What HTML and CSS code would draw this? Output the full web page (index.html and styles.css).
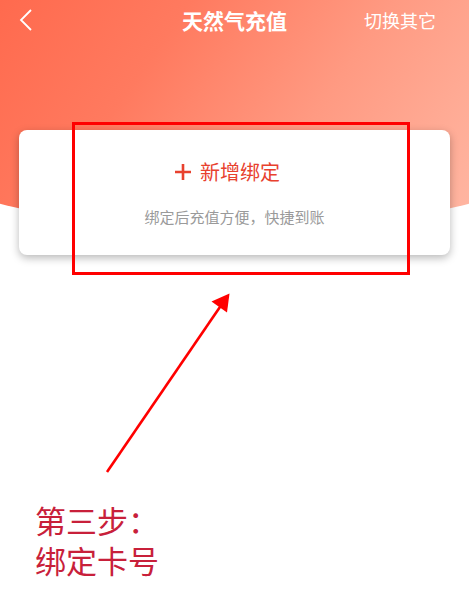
FILE: index.html
```html
<!DOCTYPE html>
<html lang="zh-CN">
<head>
<meta charset="utf-8">
<title>天然气充值</title>
<link rel="stylesheet" href="styles.css">
</head>
<body>
<div class="page">
  <div class="hero-bg"></div>
  <header class="nav">
    <svg class="back" width="14" height="22" viewBox="0 0 14 22"><polyline points="12,1 2,11 12,21" fill="none" stroke="#fff" stroke-width="1.8"/></svg>
    <h1 class="title">天然气充值</h1>
    <span class="switch">切换其它</span>
  </header>
  <section class="card">
    <div class="add-row">
      <svg class="plus" width="16" height="16" viewBox="0 0 16 16"><path d="M8 0V16M0 8H16" stroke="#e8412e" stroke-width="2.6"/></svg>
      <span class="add-text">新增绑定</span>
    </div>
    <p class="hint">绑定后充值方便，快捷到账</p>
  </section>
  <p class="step">第三步：<br>绑定卡号</p>
  <div class="highlight"></div>
  <svg class="arrow" width="469" height="600" viewBox="0 0 469 600">
    <line x1="107" y1="472" x2="222" y2="304" stroke="#ff0000" stroke-width="2.6"/>
    <polygon points="229.5,293.5 211.5,301.5 227,312.5" fill="#ff0000"/>
  </svg>
</div>
</body>
</html>
```

FILE: styles.css
```css
html, body {
  margin: 0;
  padding: 0;
  background: #fff;
}
body {
  font-family: "Noto Sans CJK SC", "Noto Sans", sans-serif;
}
.page {
  position: relative;
  width: 469px;
  height: 600px;
  overflow: hidden;
}
.hero-bg {
  position: absolute;
  left: 0;
  top: 0;
  width: 469px;
  height: 240px;
  background: linear-gradient(125deg, #ff6a4e 0%, #ff7a5f 30%, #ff9a82 62%, #ffb8a4 100%);
  clip-path: ellipse(469px 211px at 50% 21px);
  z-index: 0;
}
.nav {
  position: relative;
  z-index: 1;
  height: 40px;
  display: grid;
  grid-template-columns: 1fr auto 1fr;
  align-items: center;
  padding: 0 33px 0 19px;
}
.back {
  display: block;
  width: 14px;
  height: 22px;
}
.title {
  margin: 0 0 0 14px;
  font-size: 21px;
  font-weight: 700;
  color: #fff;
  line-height: 40px;
}
.switch {
  justify-self: end;
  font-size: 18px;
  color: #fff;
  line-height: 40px;
}
.card {
  position: relative;
  z-index: 1;
  margin: 90px 0 0 19px;
  width: 431px;
  height: 125px;
  background: #fff;
  border-radius: 8px;
  box-shadow: 0 3px 8px rgba(0, 0, 0, 0.28);
  display: flex;
  flex-direction: column;
  align-items: center;
}
.add-row {
  margin-top: 28px;
  height: 28px;
  display: flex;
  align-items: center;
  gap: 9px;
  padding-right: 14px;
}
.plus {
  display: block;
}
.add-text {
  font-size: 20px;
  color: #e8412e;
  line-height: 28px;
}
.hint {
  margin: 21px 0 0;
  font-size: 15px;
  line-height: 20px;
  color: #9a9a9a;
}
.step {
  position: relative;
  z-index: 1;
  margin: 245px 0 0 35px;
  font-size: 31px;
  line-height: 40px;
  color: #c8203a;
}
.highlight {
  position: absolute;
  z-index: 2;
  left: 72px;
  top: 122px;
  width: 338px;
  height: 153px;
  box-sizing: border-box;
  border: 3px solid #ff0000;
}
.arrow {
  position: absolute;
  z-index: 2;
  left: 0;
  top: 0;
}
```
